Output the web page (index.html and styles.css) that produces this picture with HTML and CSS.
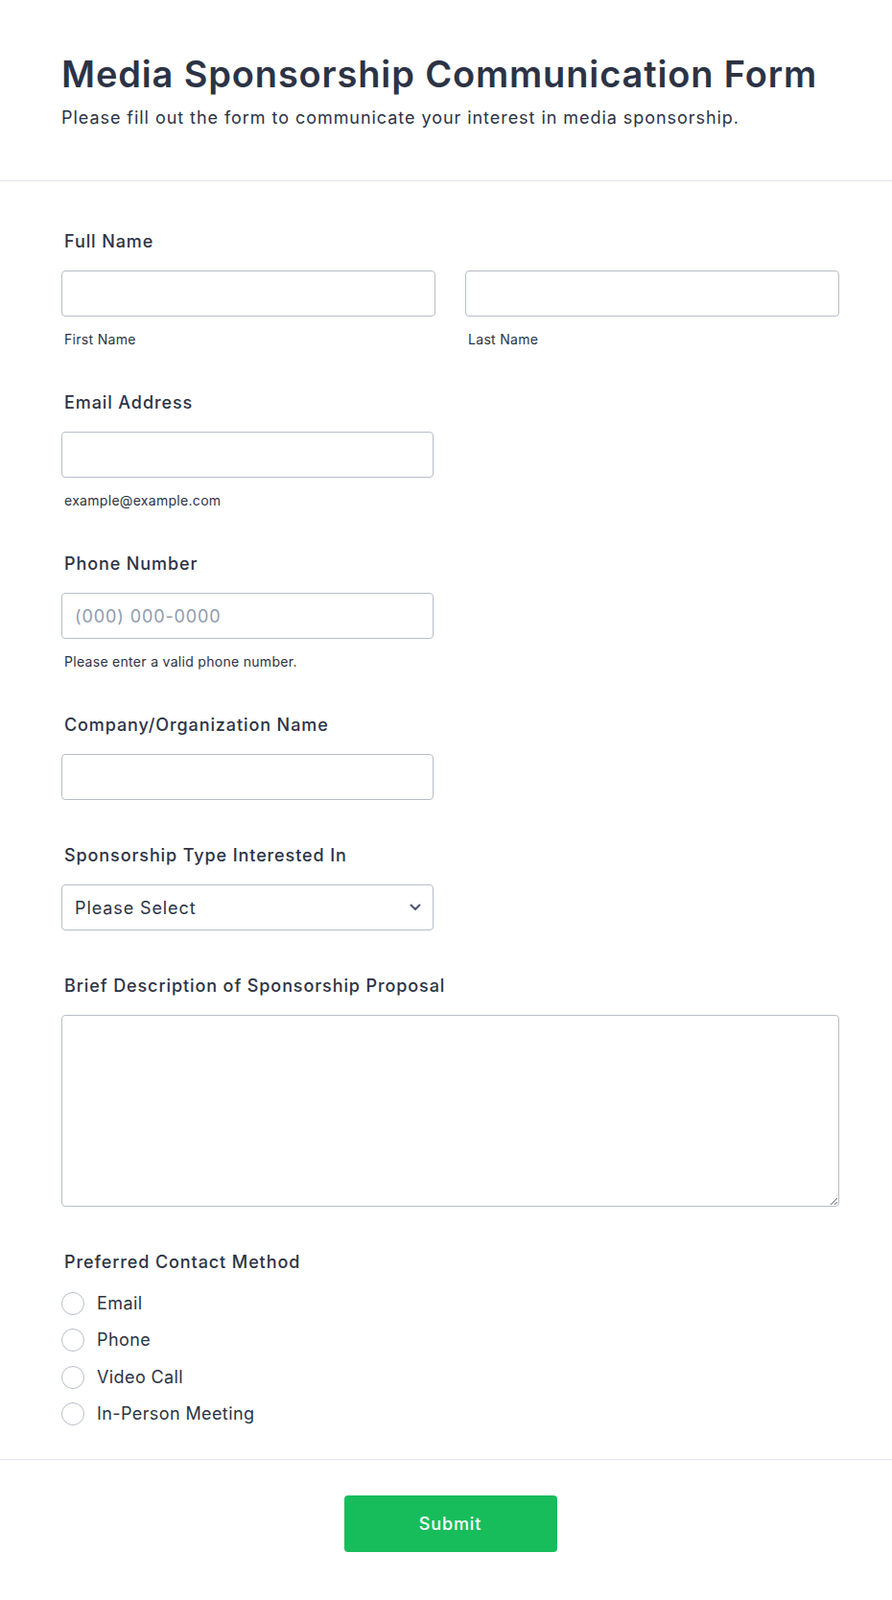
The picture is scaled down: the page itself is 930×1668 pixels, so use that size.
FILE: index.html
```html
<!DOCTYPE html>
<html lang="en">
<head>
    <meta charset="UTF-8">
    <meta name="viewport" content="width=device-width, initial-scale=1.0">
    <title>Media Sponsorship Communication Form</title>
    <link rel="stylesheet" href="styles.css">
</head>
<body>
    <div class="form-header">
        <h1>Media Sponsorship Communication Form</h1>
        <p>Please fill out the form to communicate your interest in media sponsorship.</p>
    </div>

    <form class="form-body">
        <div class="field">
            <label class="field-label">Full Name</label>
            <div class="name-row">
                <div>
                    <input type="text" class="input" name="firstName">
                    <span class="sublabel">First Name</span>
                </div>
                <div>
                    <input type="text" class="input" name="lastName">
                    <span class="sublabel">Last Name</span>
                </div>
            </div>
        </div>

        <div class="field">
            <label class="field-label" for="email">Email Address</label>
            <input type="email" class="input input-half" id="email" name="email">
            <span class="sublabel">example@example.com</span>
        </div>

        <div class="field">
            <label class="field-label" for="phone">Phone Number</label>
            <input type="tel" class="input input-half" id="phone" name="phone" placeholder="(000) 000-0000">
            <span class="sublabel">Please enter a valid phone number.</span>
        </div>

        <div class="field">
            <label class="field-label" for="company">Company/Organization Name</label>
            <input type="text" class="input input-half" id="company" name="company">
        </div>

        <div class="field">
            <label class="field-label" for="type">Sponsorship Type Interested In</label>
            <div class="select-wrap input-half">
                <select class="input select" id="type" name="type">
                    <option>Please Select</option>
                    <option>Print</option>
                    <option>Online</option>
                    <option>Broadcast</option>
                    <option>Event</option>
                </select>
                <svg class="chevron" width="12" height="8" viewBox="0 0 12 8"><path d="M1.5 1.5 6 6l4.5-4.5" fill="none" stroke="#4a5670" stroke-width="2" stroke-linecap="round" stroke-linejoin="round"/></svg>
            </div>
        </div>

        <div class="field">
            <label class="field-label" for="proposal">Brief Description of Sponsorship Proposal</label>
            <textarea class="input textarea" id="proposal" name="proposal"></textarea>
        </div>

        <div class="field field-last">
            <label class="field-label">Preferred Contact Method</label>
            <div class="radio-list">
                <label class="radio"><input type="radio" name="contact"><span>Email</span></label>
                <label class="radio"><input type="radio" name="contact"><span>Phone</span></label>
                <label class="radio"><input type="radio" name="contact"><span>Video Call</span></label>
                <label class="radio"><input type="radio" name="contact"><span>In-Person Meeting</span></label>
            </div>
        </div>
    </form>

    <div class="form-footer">
        <button type="button" class="submit-btn">Submit</button>
    </div>
</body>
</html>
```

FILE: styles.css
```css
body {
    margin: 0;
    background-color: #fff;
    font-family: 'Inter', 'Noto Sans', sans-serif;
    color: #2c3345;
    letter-spacing: 0.05em;
}

.form-header {
    padding: 53px 55px 53px 64px;
    border-bottom: 1px solid #e3e5ee;
}

.form-header h1 {
    margin: 0;
    font-size: 38px;
    font-weight: 600;
    line-height: 48px;
    letter-spacing: 0.85px;
}

.form-header p {
    margin: 10px 0 0;
    font-size: 18px;
    line-height: 24px;
    letter-spacing: 0.95px;
}

.form-body {
    padding: 52px 55px 35px 64px;
    border-bottom: 1px solid #e3e5ee;
}

.field {
    margin-bottom: 47px;
}

.field-last {
    margin-bottom: 0;
}

.field-label {
    display: block;
    padding-left: 3px;
    font-size: 18px;
    font-weight: 500;
    line-height: 22px;
    margin-bottom: 19px;
    letter-spacing: 0.9px;
}

.name-row {
    display: grid;
    grid-template-columns: 1fr 1fr;
    gap: 31px;
}

.input {
    display: block;
    width: 100%;
    height: 48px;
    box-sizing: border-box;
    border: 1px solid #b8bdc9;
    border-radius: 4px;
    padding: 0 13px;
    font-family: inherit;
    font-size: 18px;
    letter-spacing: 0.05em;
    color: #2c3345;
    background-color: #fff;
}

.input::placeholder {
    color: #8f9bb0;
}

.input-half {
    width: 388px;
}

.sublabel {
    display: block;
    padding-left: 3px;
    margin-top: 15px;
    font-size: 14px;
    line-height: 17px;
    letter-spacing: 0.3px;
}

.select-wrap {
    position: relative;
}

.select {
    appearance: none;
    -webkit-appearance: none;
    width: 100%;
}

.chevron {
    position: absolute;
    right: 13px;
    top: 20px;
    pointer-events: none;
}

.textarea {
    height: 200px;
    resize: vertical;
    padding: 12px 13px;
}

.field-last .field-label {
    margin-bottom: 0;
}

.radio-list {
    display: flex;
    flex-direction: column;
    gap: 14.4px;
    margin-top: 20px;
}

.radio {
    display: flex;
    align-items: center;
    gap: 13px;
    font-size: 18px;
    line-height: 24px;
    letter-spacing: 0.4px;
}

.radio input {
    appearance: none;
    -webkit-appearance: none;
    margin: 0;
    width: 24px;
    height: 24px;
    border: 1px solid #b8bdc9;
    border-radius: 50%;
    background-color: #fff;
}

.form-footer {
    display: flex;
    justify-content: center;
    padding: 37px 55px 40px 64px;
}

.submit-btn {
    width: 222px;
    height: 59px;
    border: none;
    border-radius: 4px;
    background-color: #18bd5b;
    color: #fff;
    font-family: inherit;
    font-size: 18px;
    font-weight: 500;
    letter-spacing: 0.05em;
    cursor: pointer;
}
```
